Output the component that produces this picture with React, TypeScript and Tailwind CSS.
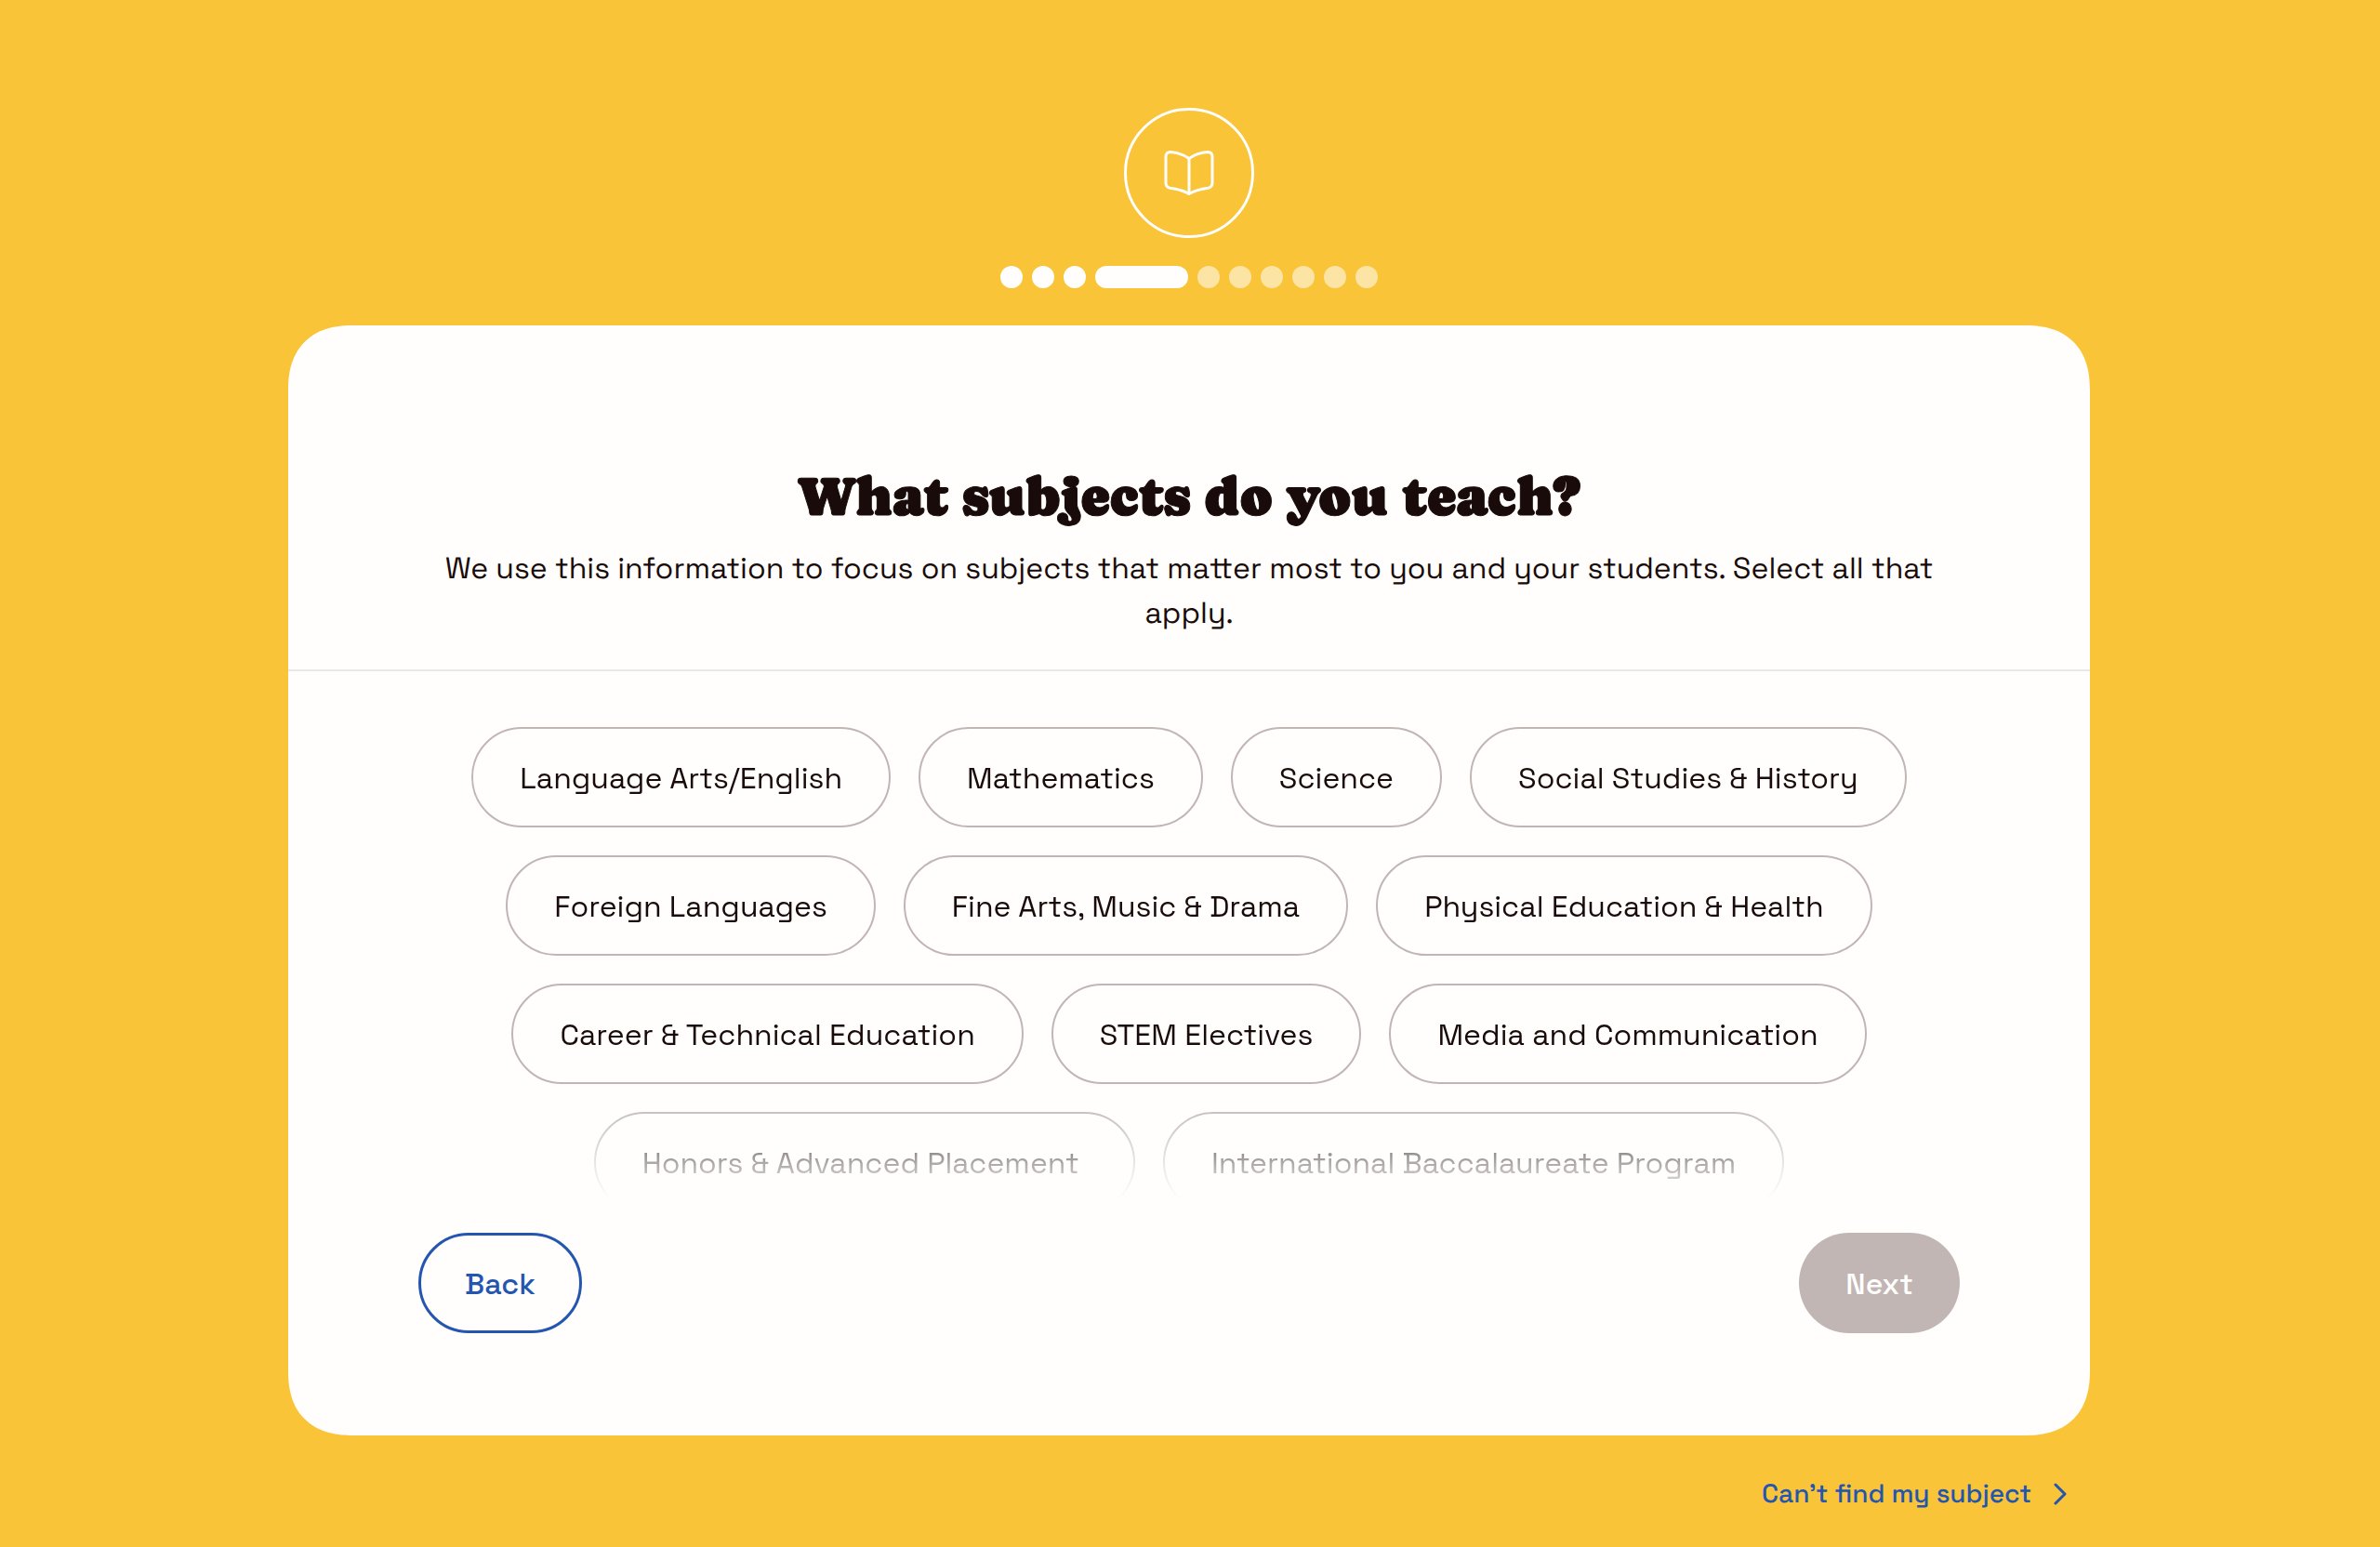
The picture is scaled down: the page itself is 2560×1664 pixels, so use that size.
import React, { useState } from "react";

const SUBJECTS = [
  "Language Arts/English",
  "Mathematics",
  "Science",
  "Social Studies & History",
  "Foreign Languages",
  "Fine Arts, Music & Drama",
  "Physical Education & Health",
  "Career & Technical Education",
  "STEM Electives",
  "Media and Communication",
  "Honors & Advanced Placement ",
  "International Baccalaureate Program",
];

const STEP_COUNT = 10;
const CURRENT_STEP = 3;

function BookIcon() {
  return (
    <svg
      width="54"
      height="50"
      viewBox="0 0 54 50"
      fill="none"
      stroke="currentColor"
      strokeWidth="3"
      strokeLinecap="round"
      strokeLinejoin="round"
      aria-hidden="true"
    >
      <path d="M27 9.5C21.500 5.500 14.500 3 7 2.500C4 2.500 2 4.500 2 8V36C2 39 3.500 40.500 6.500 41.200C14 42.200 20 43.500 27 47.500C34 43.500 40 42.200 47.500 41.200C50.500 40.500 52 39 52 36V8C52 4.500 50 2.500 47 2.500C39.500 3 32.500 5.500 27 9.500Z" />
      <path d="M27 9.500V47.500" />
    </svg>
  );
}

function ChevronIcon() {
  return (
    <svg
      width="14"
      height="24"
      viewBox="0 0 14 24"
      fill="none"
      stroke="currentColor"
      strokeWidth="3"
      strokeLinecap="round"
      strokeLinejoin="round"
      aria-hidden="true"
    >
      <path d="M2 2L12 12L2 22" />
    </svg>
  );
}

function StepDot({ index }: { index: number }) {
  if (index === CURRENT_STEP) {
    return <li aria-current="step" className="h-6 w-[100px] rounded-full bg-[#fffefd]" />;
  }
  return index < CURRENT_STEP ? (
    <li className="size-6 rounded-full bg-[#fffefd]" />
  ) : (
    <li className="size-6 rounded-full bg-[#fffefd]/55" />
  );
}

function SubjectChip({
  label,
  selected,
  onToggle,
}: {
  label: string;
  selected: boolean;
  onToggle: () => void;
}) {
  return (
    <button
      type="button"
      aria-pressed={selected}
      onClick={onToggle}
      className="h-[108px] cursor-pointer rounded-full border-2 border-[#c1b6b4] px-[50px] pt-0.5 text-[32px] leading-10 whitespace-pre aria-pressed:border-[#2456b0] aria-pressed:text-[#2456b0]"
    >
      {label}
    </button>
  );
}

export default function App() {
  const [selected, setSelected] = useState<string[]>([]);

  const toggle = (label: string) =>
    setSelected((current) =>
      current.includes(label) ? current.filter((s) => s !== label) : [...current, label],
    );

  return (
    <div className="flex min-h-screen flex-col items-center bg-[#f9c437] pt-[116px] pr-0.5 font-['Space_Grotesk',Inter,sans-serif] text-[#190b09] [text-rendering:geometricPrecision]">
      <div className="flex size-[140px] items-center justify-center rounded-full border-3 border-[#fffefd] text-[#fffefd]">
        <BookIcon />
      </div>

      <ol className="mt-[30px] flex gap-2.5" aria-label="Progress">
        {Array.from({ length: STEP_COUNT }, (_, i) => (
          <StepDot key={i} index={i} />
        ))}
      </ol>

      <div className="mt-10 w-full max-w-[1938px]">
        <main className="rounded-[70px] bg-[#fffefd] pt-[150px] pb-[110px] [corner-shape:superellipse(1.25)]">
          <header className="border-b-2 border-[#e9e8e8] px-[140px] pb-9 text-center">
            <h1 className="font-[Caprasimo,'DejaVu_Serif_Condensed',serif] text-[59px] leading-[68px] font-normal [-webkit-text-stroke:1px_#190b09]">
              What subjects do you teach?
            </h1>
            <p className="mt-5 text-[32px] leading-12">
              We use this information to focus on subjects that matter most to you and your
              students. Select all that apply.
            </p>
          </header>

          <div className="mx-[140px] h-[568px] overflow-y-auto [mask-image:linear-gradient(to_bottom,black_calc(100%-110px),transparent)] pt-[60px] [scrollbar-width:none]">
            <div className="flex flex-wrap justify-center gap-[30px]">
              {SUBJECTS.map((label) => (
                <SubjectChip
                  key={label}
                  label={label}
                  selected={selected.includes(label)}
                  onToggle={() => toggle(label)}
                />
              ))}
            </div>
          </div>

          <footer className="mt-9 flex justify-between px-[140px] text-[32px] leading-10 font-medium">
            <button
              type="button"
              className="h-[108px] cursor-pointer rounded-full border-3 border-[#2456b0] px-[47px] pt-0.5 text-[#2456b0]"
            >
              Back
            </button>
            <button
              type="button"
              disabled={selected.length === 0}
              className="h-[108px] rounded-full bg-[#2456b0] px-[50px] pt-0.5 text-[#fffefd] disabled:bg-[#c1b6b4]"
            >
              Next
            </button>
          </footer>
        </main>

        <div className="mt-[43px] mr-[25px] flex justify-end">
          <a
            href="#missing-subject"
            className="flex items-center gap-6 text-[28px] leading-10 font-medium text-[#2456b0]"
          >
            Can’t find my subject
            <ChevronIcon />
          </a>
        </div>
      </div>
    </div>
  );
}
